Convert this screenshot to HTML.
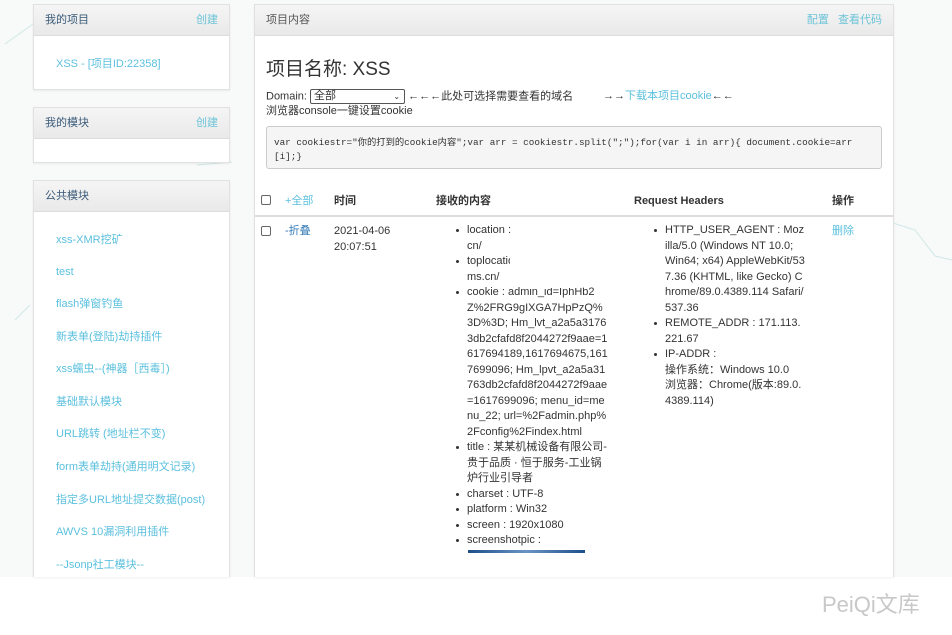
<!DOCTYPE html>
<html><head><meta charset="utf-8"><style>
*{margin:0;padding:0;box-sizing:border-box}
body{width:952px;height:635px;overflow:hidden;background:#fff;font-family:"Liberation Sans","Noto Sans CJK SC",sans-serif;font-size:11px;color:#333;position:relative}
.bg{position:absolute;left:0;top:0;width:952px;height:577px;background:#f8f9f9}
.p{position:absolute;background:#fff;border:1px solid #e1e1e1;box-shadow:0 1px 2px rgba(0,0,0,.06)}
.h{height:31px;background:linear-gradient(#f5f5f5,#e9e9e9);border-bottom:1px solid #ddd;line-height:30px;padding:0 11px;color:#3a5a78;font-size:11px;position:relative}
.h .r{position:absolute;right:11px;top:0;color:#6cc4d8}
a,.lk{color:#5bc0de;text-decoration:none}
.it{position:absolute;left:22px;color:#5bc0de;font-size:11px;line-height:13px;white-space:nowrap}
.a{position:absolute;white-space:nowrap;line-height:13px}
.cb{position:absolute;width:10px;height:10px;border:1px solid #666;border-radius:2px;background:#fff}
ul{position:absolute;list-style:none;line-height:15.5px;font-size:11px;color:#333;white-space:nowrap}
li{position:relative;padding-left:11px;height:auto}
li div{height:15.5px;line-height:15.5px}
li:before{content:"";position:absolute;left:0;top:6px;width:3px;height:3px;background:#333;border-radius:50%}
</style></head><body>
<div class="bg"></div>
<svg style="position:absolute;left:0;top:0" width="952" height="635"><g stroke="#cfe9e6" stroke-width="1" fill="none"><path d="M5 44 L33 24"/><path d="M197 165 L232 162"/><path d="M893 223 L915 230 L935 256 L952 260"/><path d="M15 320 L30 305"/></g></svg>

<div class="p" style="left:33px;top:4px;width:197px;height:86px">
<div class="h">我的项目<span class="r">创建</span></div>
<div class="it" style="top:53px">XSS - [项目ID:22358]</div></div>

<div class="p" style="left:33px;top:107px;width:197px;height:56px">
<div class="h">我的模块<span class="r">创建</span></div></div>

<div class="p" style="left:33px;top:180px;width:197px;height:397px;border-bottom:none">
<div class="h">公共模块</div>
<div class="it" style="top:53px">xss-XMR挖矿</div>
<div class="it" style="top:85px">test</div>
<div class="it" style="top:117px">flash弹窗钓鱼</div>
<div class="it" style="top:150px">新表单(登陆)劫持插件</div>
<div class="it" style="top:182px">xss蠕虫--(神器［西毒］)</div>
<div class="it" style="top:215px">基础默认模块</div>
<div class="it" style="top:247px">URL跳转 (地址栏不变)</div>
<div class="it" style="top:280px">form表单劫持(通用明文记录)</div>
<div class="it" style="top:313px">指定多URL地址提交数据(post)</div>
<div class="it" style="top:345px">AWVS 10漏洞利用插件</div>
<div class="it" style="top:378px">--Jsonp社工模块--</div>
</div>

<div class="p" style="left:254px;top:4px;width:640px;height:573px;border-bottom:none">
<div class="h" style="color:#555">项目内容<span class="r">配置&nbsp;&nbsp;&nbsp;查看代码</span></div>
</div>
<div class="a" style="left:266px;top:59px;font-size:19px;line-height:22px;color:#333">项目名称: XSS</div>
<div class="a" style="left:266px;top:89px;color:#333">Domain: <span style="display:inline-block;width:95px;height:15px;border:1px solid #555;border-radius:2px;vertical-align:middle;padding-left:3px;line-height:13px;position:relative">全部<span style="position:absolute;right:4px;top:0;font-size:8px">&#8964;</span></span> ←←←此处可选择需要查看的域名</div>
<div class="a" style="left:603px;top:90px;color:#333">→→<span class="lk">下载本项目cookie</span>←←</div>
<div class="a" style="left:266px;top:105px;color:#333">浏览器console一键设置cookie</div>
<div style="position:absolute;left:266px;top:126px;width:616px;height:43px;background:#f5f5f5;border:1px solid #ccc;border-radius:3px;padding:9px 7px;font-family:'Liberation Mono','Noto Sans CJK SC',monospace;font-size:9.3px;line-height:14px;color:#333;word-break:break-all">var cookiestr="你的打到的cookie内容";var arr = cookiestr.split(";");for(var i in arr){ document.cookie=arr[i];}</div>

<div class="cb" style="left:261px;top:195px"></div>
<div class="a lk" style="left:285px;top:195px">+全部</div>
<div class="a" style="left:334px;top:195px;font-weight:bold">时间</div>
<div class="a" style="left:436px;top:195px;font-weight:bold">接收的内容</div>
<div class="a" style="left:634px;top:195px;font-weight:bold">Request Headers</div>
<div class="a" style="left:832px;top:195px;font-weight:bold">操作</div>
<div style="position:absolute;left:255px;top:215px;width:638px;height:2px;background:#ddd"></div>

<div class="cb" style="left:261px;top:226px"></div>
<div class="a" style="left:285px;top:225px;color:#337ab7">-折叠</div>
<div class="a" style="left:334px;top:224px;line-height:15.5px">2021-04-06<br>20:07:51</div>
<ul style="left:456px;top:223px">
<li><div>location :</div><div>cn/</div></li>
<li><div>toplocation</div><div>ms.cn/</div></li>
<li><div>cookie : admin_id=IphHb2</div><div>Z%2FRG9gIXGA7HpPzQ%</div><div>3D%3D; Hm_lvt_a2a5a3176</div><div>3db2cfafd8f2044272f9aae=1</div><div>617694189,1617694675,161</div><div>7699096; Hm_lpvt_a2a5a31</div><div>763db2cfafd8f2044272f9aae</div><div>=1617699096; menu_id=me</div><div>nu_22; url=%2Fadmin.php%</div><div>2Fconfig%2Findex.html</div></li>
<li><div>title : 某某机械设备有限公司-</div><div>贵于品质 · 恒于服务-工业锅</div><div>炉行业引导者</div></li>
<li><div>charset : UTF-8</div></li>
<li><div>platform : Win32</div></li>
<li><div>screen : 1920x1080</div></li>
<li><div>screenshotpic :</div></li>
</ul>
<div style="position:absolute;left:510px;top:218px;width:90px;height:70px;background:#fff;border-radius:20px"></div>
<div style="position:absolute;left:468px;top:550px;width:117px;height:3px;background:linear-gradient(90deg,#1d4f8a,#6a94c4,#1d4f8a)"></div>
<ul style="left:654px;top:223px">
<li><div>HTTP_USER_AGENT : Moz</div><div>illa/5.0 (Windows NT 10.0;</div><div>Win64; x64) AppleWebKit/53</div><div>7.36 (KHTML, like Gecko) C</div><div>hrome/89.0.4389.114 Safari/</div><div>537.36</div></li>
<li><div>REMOTE_ADDR : 171.113.</div><div>221.67</div></li>
<li><div>IP-ADDR :</div><div>操作系统：Windows 10.0</div><div>浏览器：Chrome(版本:89.0.</div><div>4389.114)</div></li>
</ul>
<div class="a lk" style="left:832px;top:225px">删除</div>
<div class="a" style="left:822px;top:592px;font-size:22px;line-height:26px;color:#c8c8c8">PeiQi文库</div>
</body></html>
